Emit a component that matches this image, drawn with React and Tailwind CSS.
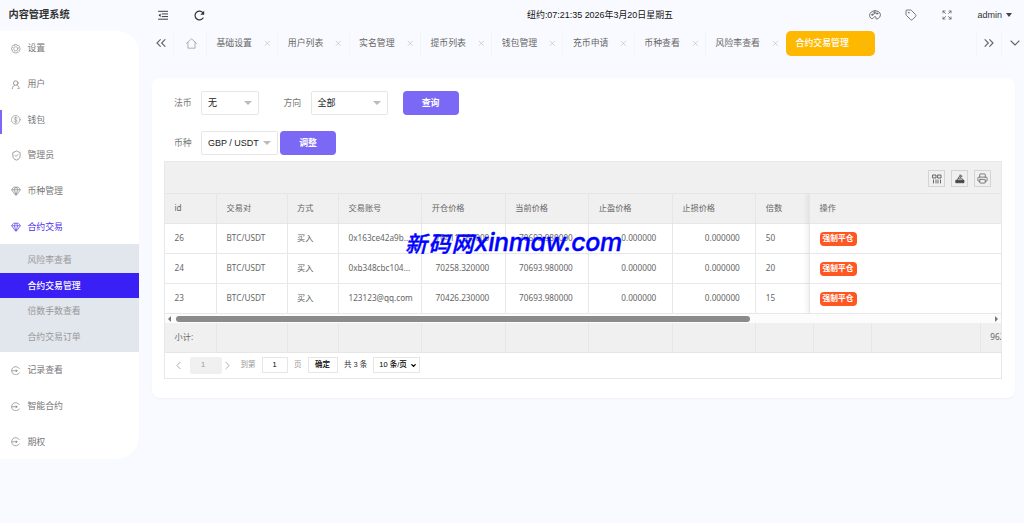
import { ShieldCheck, Gem, Tag, Printer, ChevronsLeft, ChevronsRight, ChevronDown, ChevronLeft, ChevronRight, X } from 'lucide-react'

const UI_FONT = "font-['Liberation_Sans','Noto_Sans_CJK_SC',sans-serif]"
const TABLE_FONT = "font-['Noto_Sans','Noto_Sans_CJK_SC',sans-serif]"

function Svg({ children, className = 'size-[9.500px]', sw = 1.4 }) {
  return (
    <svg viewBox="0 0 20 20" className={`shrink-0 ${className}`} fill="none" stroke="currentColor" strokeWidth={sw} strokeLinecap="round" strokeLinejoin="round">
      {children}
    </svg>
  )
}

const GearIcon = () => (
  <Svg>
    <path d="M8 1h4l.7 2.6 2.6-1.3 2.500 2.500-1.400 2.500L19 8v4l-2.600.7 1.400 2.500-2.500 2.500-2.600-1.300L12 19H8l-.7-2.600-2.600 1.300-2.500-2.500 1.400-2.500L1 12V8l2.600-.7-1.400-2.500 2.500-2.500 2.600 1.300z" />
    <circle cx="10" cy="10" r="4.300" />
  </Svg>
)

const UserIcon = () => (
  <Svg sw={1.9}>
    <circle cx="10" cy="6.500" r="4.800" />
    <path d="M7.500 11c-2.500 1.200-4.300 3.500-4.800 7.500M12.500 11c2.500 1.200 4.300 3.500 4.800 7.500h-3" />
  </Svg>
)

const DollarIcon = () => (
  <Svg>
    <circle cx="10" cy="10" r="9" />
    <path d="M13 7c-.5-1.200-1.500-1.800-3-1.800-4 0-4 4.300 0 4.800s4 4.800 0 4.800c-1.700 0-2.700-.7-3.200-2M10 3.500v13" />
  </Svg>
)

const EntryIcon = () => (
  <Svg sw={1.7}>
    <path d="M17.500 5.500a8.700 8.700 0 1 0 0 9M2 10h10" />
    <path d="M10 7l4.500 3-4.500 3z" fill="currentColor" stroke="none" />
  </Svg>
)

const ShieldIcon = () => <ShieldCheck className="-ml-[0.500px] size-[11px] shrink-0" strokeWidth={1.900} />
const GemIcon = () => <Gem className="size-[10px] shrink-0" strokeWidth={2} />

const MENU = [
  { label: '设置', icon: GearIcon },
  { label: '用户', icon: UserIcon },
  { label: '钱包', icon: DollarIcon, marked: true },
  { label: '管理员', icon: ShieldIcon },
  { label: '币种管理', icon: GemIcon },
  { label: '合约交易', icon: GemIcon, open: true, children: ['风险率查看', '合约交易管理', '倍数手数查看', '合约交易订单'] },
  { label: '记录查看', icon: EntryIcon },
  { label: '智能合约', icon: EntryIcon },
  { label: '期权', icon: EntryIcon },
]

const TABS = ['基础设置', '用户列表', '实名管理', '提币列表', '钱包管理', '充币申请', '币种查看', '风险率查看']

const ROWS = [
  ['26', 'BTC/USDT', '买入', '0x163ce42a9b...', '70411.160000', '70693.980000', '0.000000', '0.000000', '50'],
  ['24', 'BTC/USDT', '买入', '0xb348cbc104...', '70258.320000', '70693.980000', '0.000000', '0.000000', '20'],
  ['23', 'BTC/USDT', '买入', '123123@qq.com', '70426.230000', '70693.980000', '0.000000', '0.000000', '15'],
]

const HEADS = ['id', '交易对', '方式', '交易账号', '开仓价格', '当前价格', '止盈价格', '止损价格', '倍数']

const COLS = 'grid grid-cols-[52px_70.500px_51.500px_83.300px_83.500px_83.500px_83.500px_83.500px_54px]'
const TOTAL_COLS = 'grid grid-cols-[52px_70.500px_51.500px_83.300px_83.500px_83.500px_83.500px_83.500px_58px_58px_109px_20px]'

function Sidebar() {
  return (
    <aside className="w-[139px] shrink-0">
      <h1 className="h-[30.500px] pt-[1px] pl-[8.500px] text-[10.200px] leading-[28px] font-bold text-[#333]">内容管理系统</h1>
      <nav className="h-[428.500px] rounded-r-[22px] bg-white text-[8.900px] text-[#777]">
        {MENU.map(({ label, icon: Icon, marked, open, children }) => (
          <div key={label}>
            <div className={`relative flex h-[35.650px] items-center pl-[11px] ${open ? 'text-[#4c2ff0]' : ''}`}>
              {marked && <span className="absolute top-[8px] left-0 h-[24px] w-[2px] bg-[#7b68f5]" />}
              <span className="flex w-[16.500px] pt-[1px] opacity-80"><Icon /></span>
              <span className="pt-[1.500px]">{label}</span>
            </div>
            {children && (
              <div className="h-[108px] bg-[#e2e6ed] pt-[3px] text-[#999]">
                {children.map(c => (
                  <div key={c} className={`flex h-[25.500px] items-center pt-[1.500px] pl-[27.500px] ${c === '合约交易管理' ? 'bg-[#3b20f5] font-medium text-white' : ''}`}>
                    {c}
                  </div>
                ))}
              </div>
            )}
          </div>
        ))}
      </nav>
    </aside>
  )
}

function TopBar() {
  return (
    <header className="relative flex h-[30.500px] items-center text-[#333]">
      <Svg className="ml-[18.500px] size-[10.500px]" sw={1.8}>
        <path d="M1 2.500h18M8 7.500h11M8 12.500h11M1 17.500h18" />
        <path d="M5 6.500v7L1 10z" fill="currentColor" stroke="none" />
      </Svg>
      <Svg className="ml-[25.500px] size-[11px]" sw={2.200}>
        <path d="M16.500 14.500A8 8 0 1 1 16.500 5.500" />
        <path d="M18.500 1.500v7h-7z" fill="currentColor" stroke="none" />
      </Svg>
      <div className="absolute top-[8px] left-[388px] text-[8.950px] leading-[15px] whitespace-nowrap text-[#111]">纽约:07:21:35 2026年3月20日星期五</div>
      <div className="ml-auto flex items-center pr-[12px] text-[#555]">
        <Svg className="size-[12px]" sw={1.4}>
          <path d="M10 3C4.500 3 1 6.500 1 10.500c0 3.500 2 5.500 4.500 5.500 2 0 2-2 3.500-3 2-1.200 3 .5 2.500 2-.4 1.500.5 2 2 1.500 3-.8 5.500-3.500 5.500-7C19 5.500 15 3 10 3z" />
          <circle cx="5.500" cy="9.500" r="1.200" /><circle cx="9" cy="6.500" r="1.200" /><circle cx="13.500" cy="7.500" r="1.200" />
        </Svg>
        <Tag className="ml-[24px] size-[12px]" strokeWidth={1.6} />
        <Svg className="ml-[25px] size-[10px]" sw={1.5}>
          <path d="M2 6V2h4M2 2l5 5M14 2h4v4M18 2l-5 5M2 14v4h4M2 18l5-5M14 18h4v-4M18 18l-5-5" />
        </Svg>
        <span className="ml-[25px] text-[9px] text-[#333]">admin</span>
        <span className="ml-[4px] border-x-[3.500px] border-t-[4px] border-x-transparent border-t-[#444]" />
      </div>
    </header>
  )
}

function TabBar() {
  return (
    <div className="flex h-[25.500px] items-center text-[8.900px] text-[#666]">
      <div className="flex h-full w-[34.500px] items-center border-r border-[#f3f4f7] pl-[14px]">
        <ChevronsLeft className="size-[16px]" strokeWidth={1.700} />
      </div>
      <div className="flex h-full w-[33.500px] items-center justify-center border-r border-[#f3f4f7] pl-[3px] text-[#999]">
        <Svg className="size-[11px]" sw={1.4}>
          <path d="M1 9.500L10 1.500l9 8M3.500 8v10.500h13V8" />
        </Svg>
      </div>
      {TABS.map(t => (
        <div key={t} className={`flex h-full shrink-0 items-center pl-[9.500px] ${t === '风险率查看' ? 'w-[80px]' : 'w-[71.300px] border-r border-[#f3f4f7]'}`}>
          <span className="pt-[1px]">{t}</span>
          <X className="ml-[11px] size-[8.700px] text-[#c4c4c8]" strokeWidth={2} />
        </div>
      ))}
      <div className="flex h-full w-[89px] shrink-0 items-center rounded-[5px] bg-[#ffb800] pl-[9.500px] font-medium text-white">
        <span className="pt-[1px]">合约交易管理</span>
        <X className="ml-[11px] size-[8.700px] text-[#e0b850]" strokeWidth={2} />
      </div>
      <div className="ml-auto flex h-full w-[26px] items-center justify-center border-x border-[#f3f4f7]">
        <ChevronsRight className="size-[16px] shrink-0" strokeWidth={1.700} />
      </div>
      <div className="flex w-[22px] justify-end">
        <ChevronDown className="mr-[1px] size-[16px]" strokeWidth={1.700} />
      </div>
    </div>
  )
}

function Select({ value, className }) {
  return (
    <div className={`flex h-[24px] items-center justify-between rounded-[2px] border border-[#e6e6e6] pr-[6px] pl-[6px] text-[9px] text-[#222] ${className}`}>
      <span className="pt-[1px]">{value}</span>
      <span className="border-x-[4px] border-t-[4px] border-x-transparent border-t-[#bbb]" />
    </div>
  )
}

function Button({ children }) {
  return <button className="h-[24px] w-[56px] rounded-[4px] bg-[#7b68f5] pt-[1px] text-[8.900px] font-bold text-white">{children}</button>
}

function Filters() {
  return (
    <div className="text-[8.900px] text-[#777]">
      <div className="flex h-[24px] items-center">
        <span className="w-[37px] pt-[1px] pl-[10px]">法币</span>
        <Select value="无" className="w-[58px]" />
        <span className="w-[51.500px] pt-[1px] pl-[24.500px]">方向</span>
        <Select value="全部" className="w-[77px]" />
        <span className="w-[15px]" />
        <Button>查询</Button>
      </div>
      <div className="mt-[16px] flex h-[24px] items-center">
        <span className="w-[37px] pt-[1px] pl-[10px]">币种</span>
        <Select value="GBP / USDT" className="mr-[2px] w-[77px]" />
        <Button>调整</Button>
      </div>
    </div>
  )
}

function ToolButton({ children }) {
  return <span className="flex size-[17px] items-center justify-center border border-[#d4d4d4] text-[#444]">{children}</span>
}

function Pager() {
  return (
    <div className={`flex h-[25px] items-center text-[7.500px] text-[#999] ${UI_FONT}`}>
      <ChevronLeft className="ml-[7px] size-[13px] text-[#aaa]" strokeWidth={1.800} />
      <span className="ml-[5px] flex h-[17px] w-[32px] items-center justify-center rounded-[2px] bg-[#f0f0f0] pr-[6px]">1</span>
      <ChevronRight className="-ml-[1px] size-[13px] text-[#aaa]" strokeWidth={1.800} />
      <span className="ml-[6.500px]">到第</span>
      <span className="ml-[6px] flex h-[16px] w-[26px] items-center justify-center border border-[#e6e6e6] text-black">1</span>
      <span className="ml-[6.500px]">页</span>
      <span className="ml-[6px] flex h-[16px] w-[30px] items-center justify-center border border-[#e6e6e6] font-medium text-black">确定</span>
      <span className="ml-[6.500px] text-[#333]">共 3 条</span>
      <span className="ml-[6px] flex h-[16px] w-[47px] items-center justify-between border border-[#e6e6e6] pr-[2px] pl-[5px] font-medium text-black">
        10 条/页
        <ChevronDown className="size-[7px]" strokeWidth={4.500} />
      </span>
    </div>
  )
}

function DataTable() {
  return (
    <div className={`mt-[6px] h-[217.500px] w-[838px] overflow-hidden border border-[#e8e8e8] text-[8.200px] text-[#666] ${TABLE_FONT}`}>
      <div className="flex h-[31px] items-center justify-end gap-[6px] bg-[#f0f0f0] pt-[2px] pr-[10px]">
        <ToolButton>
          <Svg className="size-[10px]" sw={1.6}><path d="M2 2h6v6H2zM12 2h6v6h-6zM3 12v6M8 12v6M12 12v6M17 12v6" /></Svg>
        </ToolButton>
        <ToolButton>
          <Svg className="size-[10px]" sw={1.5}>
            <path d="M2 12.500h16v5H2z" fill="currentColor" />
            <path d="M4 12.500l1.500-3h9l1.500 3M6.500 9c0-3 1.500-4.500 4-4.500M10.500 2l4 2.500-4 2.500z" />
          </Svg>
        </ToolButton>
        <ToolButton><Printer className="size-[11px] text-[#666]" strokeWidth={1.8} /></ToolButton>
      </div>
      <div className="relative flex h-[121px] overflow-hidden">
        <div className="w-[644px] shrink-0">
          <div className={`${COLS} h-[31px] border-y border-[#e6e6e6] bg-[#f0f0f0]`}>
            {HEADS.map(h => <div key={h} className="flex items-center border-r border-[#e6e6e6] pl-[9.500px] last:border-0">{h}</div>)}
          </div>
          {ROWS.map(row => (
            <div key={row[0]} className={`${COLS} h-[30px] border-b border-[#e8e8e8]`}>
              {row.map((cell, i) => (
                <div key={i} className={`flex items-center border-r border-[#e8e8e8] whitespace-nowrap last:border-0 ${i > 3 && i < 8 ? 'justify-end pr-[15.500px]' : 'pl-[9.500px]'}`}>
                  {cell}
                </div>
              ))}
            </div>
          ))}
        </div>
        <div className="flex-1 border-l border-[#e6e6e6] bg-white shadow-[-1px_0_6px_rgba(0,0,0,0.09)]">
          <div className="flex h-[31px] items-center border-y border-[#e6e6e6] bg-[#f0f0f0] pl-[9.500px]">操作</div>
          {ROWS.map(row => (
            <div key={row[0]} className="flex h-[30px] items-center border-b border-[#e8e8e8] pt-[1px] pl-[9.500px]">
              <span className="flex h-[14px] w-[37px] items-center justify-center rounded-[4px] bg-[#ff5722] text-[7.700px] font-bold text-white">强制平仓</span>
            </div>
          ))}
        </div>
      </div>
      <div className="flex h-[9px] items-center bg-[#fcfcfc]">
        <span className="ml-[3px] border-y-[3px] border-r-[3px] border-y-transparent border-r-[#777]" />
        <span className="ml-[5px] h-[6px] w-[574px] rounded-full bg-[#8b8b8b]" />
        <span className="mr-[3px] ml-auto border-y-[3px] border-l-[3px] border-y-transparent border-l-[#777]" />
      </div>
      <div className={`${TOTAL_COLS} h-[29.500px] border-b border-[#e6e6e6] bg-[#f0f0f0]`}>
        {['小计:', '', '', '', '', '', '', '', '', '', '', '962'].map((t, i) => (
          <div key={i} className="flex items-center overflow-hidden border-r border-[#e6e6e6] pl-[9.500px] last:border-0 last:pl-[9px]">{t}</div>
        ))}
      </div>
      <Pager />
    </div>
  )
}

function Watermark() {
  return (
    <div className="pointer-events-none absolute top-[227px] left-[405px] flex h-[30px] items-center whitespace-nowrap text-[#0000ff] italic">
      <span className="font-['Noto_Sans_CJK_SC',sans-serif] text-[22px] font-medium tracking-[1.200px] [-webkit-text-stroke:0.4px_#0000ff]">新码网</span>
      <span className="pt-[2px] font-['Inter',sans-serif] text-[25px] font-medium tracking-[-0.400px] [-webkit-text-stroke:0.4px_#0000ff]">xinmaw.com</span>
    </div>
  )
}

export default function App() {
  return (
    <div className={`relative flex h-[523px] w-[1024px] overflow-hidden bg-[#f9faff] ${UI_FONT}`}>
      <Sidebar />
      <div className="min-w-0 flex-1">
        <TopBar />
        <TabBar />
        <main className="mt-[22px] mr-[9.500px] ml-[13px] h-[319.500px] rounded-[8px] bg-white px-[12px] pt-[13px] shadow-[0_1px_2px_rgba(0,0,0,0.04)]">
          <Filters />
          <DataTable />
        </main>
      </div>
      <Watermark />
    </div>
  )
}
